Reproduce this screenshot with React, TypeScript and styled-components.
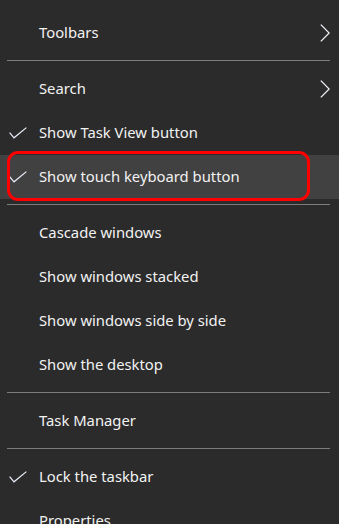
import React from "react";
import styled, { createGlobalStyle } from "styled-components";

const Global = createGlobalStyle`
  html, body { margin: 0; padding: 0; background: #2b2b2b; }
  body { width: 339px; height: 524px; overflow: hidden; }
`;

const Menu = styled.div`
  width: 339px;
  height: 524px;
  overflow: hidden;
  background: #2b2b2b;
  padding-top: 11px;
  box-sizing: border-box;
  font-family: "Noto Sans", "Open Sans", sans-serif;
  font-size: 14.8px;
  color: #f2f2f2;
`;

const Row = styled.div<{ $hover?: boolean }>`
  position: relative;
  height: 44px;
  display: flex;
  align-items: center;
  background: ${(p) => (p.$hover ? "#414141" : "transparent")};
`;

const CheckCell = styled.div`
  width: 39px;
  flex: 0 0 39px;
  box-sizing: border-box;
  padding-left: 9px;
  display: flex;
  align-items: center;
`;

const Label = styled.span`
  flex: 1;
  white-space: nowrap;
  line-height: 1;
  padding-bottom: 1px;
`;

const ArrowCell = styled.div`
  width: 10px;
  margin-right: 9px;
  display: flex;
  align-items: center;
`;

const Separator = styled.div`
  height: 1px;
  margin: 5px 9px 6px 7px;
  background: #7c7c7c;
`;

const Highlight = styled.div`
  position: absolute;
  left: 7px;
  top: -4px;
  width: 303px;
  bottom: -2px;
  box-sizing: border-box;
  border: 3px solid #ff0000;
  border-radius: 11px;
  pointer-events: none;
`;

const Check = () => (
  <svg width="18" height="12" viewBox="0 0 18 12" fill="none">
    <path d="M0.6 5.6 L5 10.8 L17.4 0.6" stroke="#e8eef8" strokeWidth="1.2" />
  </svg>
);

const Chevron = () => (
  <svg width="10" height="18" viewBox="0 0 10 18" fill="none">
    <path d="M0.8 0.6 L9.2 9 L0.8 17.4" stroke="#eef2f8" strokeWidth="1.3" />
  </svg>
);

type Item =
  | { kind: "sep" }
  | { kind: "item"; label: string; checked?: boolean; sub?: boolean; hover?: boolean };

const items: Item[] = [
  { kind: "item", label: "Toolbars", sub: true },
  { kind: "sep" },
  { kind: "item", label: "Search", sub: true },
  { kind: "item", label: "Show Task View button", checked: true },
  { kind: "item", label: "Show touch keyboard button", checked: true, hover: true },
  { kind: "sep" },
  { kind: "item", label: "Cascade windows" },
  { kind: "item", label: "Show windows stacked" },
  { kind: "item", label: "Show windows side by side" },
  { kind: "item", label: "Show the desktop" },
  { kind: "sep" },
  { kind: "item", label: "Task Manager" },
  { kind: "sep" },
  { kind: "item", label: "Lock the taskbar", checked: true },
  { kind: "item", label: "Properties" },
];

export default function App() {
  return (
    <>
      <Global />
      <Menu>
        {items.map((it, i) =>
          it.kind === "sep" ? (
            <Separator key={i} />
          ) : (
            <Row key={i} $hover={it.hover}>
              <CheckCell>{it.checked && <Check />}</CheckCell>
              <Label>{it.label}</Label>
              {it.sub && (
                <ArrowCell>
                  <Chevron />
                </ArrowCell>
              )}
              {it.hover && <Highlight />}
            </Row>
          )
        )}
      </Menu>
    </>
  );
}
